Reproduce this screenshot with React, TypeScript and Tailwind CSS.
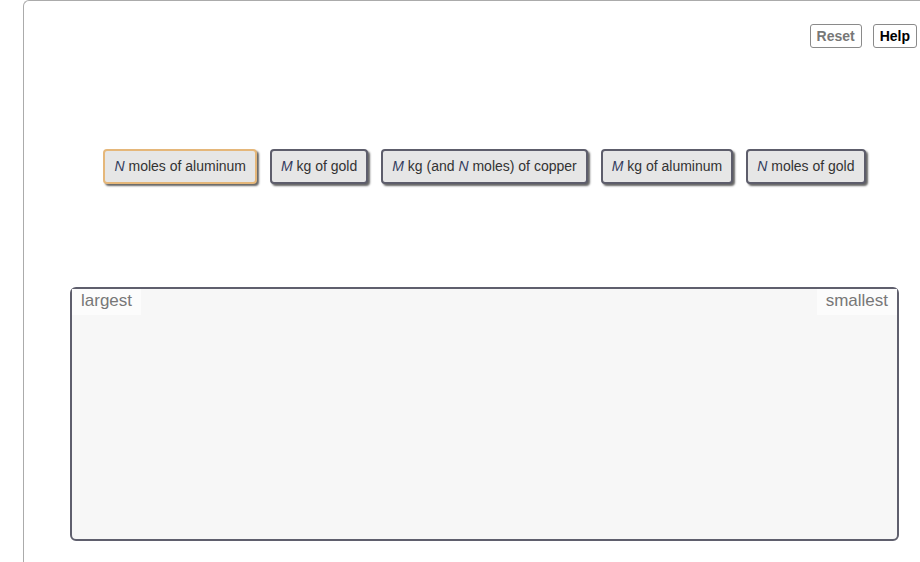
const cards = [
  { v: 'N', rest: ' moles of aluminum', active: true },
  { v: 'M', rest: ' kg of gold' },
  { v: 'M', rest: ' kg (and ', v2: 'N', rest2: ' moles) of copper' },
  { v: 'M', rest: ' kg of aluminum' },
  { v: 'N', rest: ' moles of gold' },
]

function Card({ c }: { c: (typeof cards)[number] }) {
  return (
    <div
      className={
        'flex h-[35px] items-center rounded-[4px] border-2 bg-[#e6e6e6] px-[9px] text-[14px] text-[#333] shadow-[2px_2px_2px_#666] ' +
        (c.active ? 'border-[#e5b77a]' : 'border-[#5d5d6b]')
      }
    >
      <span>
        <i className="text-[#333c5e]">{c.v}</i>
        {c.rest}
        {c.v2 && <i className="text-[#333c5e]">{c.v2}</i>}
        {c.rest2}
      </span>
    </div>
  )
}

export default function App() {
  return (
    <div className="h-[562px] w-[920px] overflow-hidden bg-white font-['Liberation_Sans',Arial,sans-serif]">
      <div className="ml-[23px] h-[600px] w-[922px] rounded-tl-[6px] border-l border-t border-[#ababab]">
        <div className="flex justify-end gap-[11px] pr-[28px] pt-[23px]">
          <button className="h-[24px] rounded-[3px] border border-[#8a8a8a] bg-white px-[6px] text-[14px] font-bold text-[#777]">
            Reset
          </button>
          <button className="h-[24px] rounded-[3px] border border-[#8a8a8a] bg-white px-[6px] text-[14px] font-bold text-black">
            Help
          </button>
        </div>
        <div className="mt-[101px] flex justify-center gap-[13px]">
          {cards.map((c, i) => (
            <Card key={i} c={c} />
          ))}
        </div>
        <div className="ml-[46px] mt-[103px] h-[254px] w-[829px] rounded-[6px] border-2 border-[#5f5f6d] bg-[#f7f7f7]">
          <div className="flex justify-between">
            <span className="bg-[#fcfcfc] px-[9px] pt-[1px] pb-[3px] text-[17px] leading-[22px] text-[#777]">largest</span>
            <span className="bg-[#fcfcfc] px-[9px] pt-[1px] pb-[3px] text-[17px] leading-[22px] text-[#777]">smallest</span>
          </div>
        </div>
      </div>
    </div>
  )
}
